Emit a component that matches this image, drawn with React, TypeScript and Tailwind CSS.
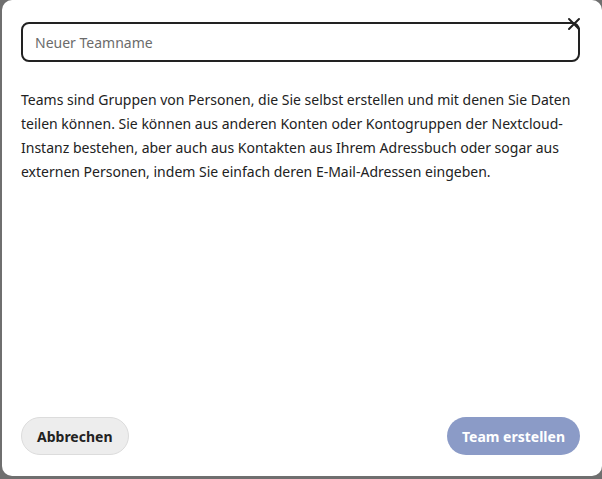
import React from "react";

const font = { fontFamily: '"Segoe UI", "Noto Sans", "Open Sans", sans-serif' };

export default function App() {
  return (
    <div className="h-[479px] w-[602px] overflow-hidden bg-[#6f6f6f] pl-[2px] pb-[3px]" style={font}>
      <div className="relative flex h-full flex-col rounded-[10px] bg-white pl-[19px] pr-[22px] pt-[22px] pb-[21px]">
        {/* close */}
        <button className="absolute right-[21px] top-[17px] text-[#222]" aria-label="Schließen">
          <svg width="14" height="14" viewBox="0 0 14 14" fill="none" stroke="currentColor" strokeWidth="2" strokeLinecap="round">
            <path d="M2 2 L12 12 M12 2 L2 12" />
          </svg>
        </button>

        <div className="flex h-[40px] w-full items-center rounded-[8px] border-2 border-[#222] px-3">
          <input
            placeholder="Neuer Teamname"
            className="w-full bg-transparent text-[14px] text-[#222] outline-none placeholder:text-[#6b6b6b]"
          />
        </div>

        <p className="mt-[26px] text-[14px] leading-[24px] text-[#222]">
          Teams sind Gruppen von Personen, die Sie selbst erstellen und mit denen Sie Daten teilen können. Sie können aus
          anderen Konten oder Kontogruppen der Nextcloud-Instanz bestehen, aber auch aus Kontakten aus Ihrem Adressbuch
          oder sogar aus externen Personen, indem Sie einfach deren E-Mail-Adressen eingeben.
        </p>

        <div className="mt-auto flex items-center justify-between">
          <button className="h-[38px] rounded-full border border-[#dcdcdc] bg-[#ededed] px-[15px] text-[14px] font-bold text-[#222]">
            Abbrechen
          </button>
          <button className="h-[38px] rounded-full bg-[#8b9bc7] px-[15px] text-[14px] font-bold text-white">
            Team erstellen
          </button>
        </div>
      </div>
    </div>
  );
}
